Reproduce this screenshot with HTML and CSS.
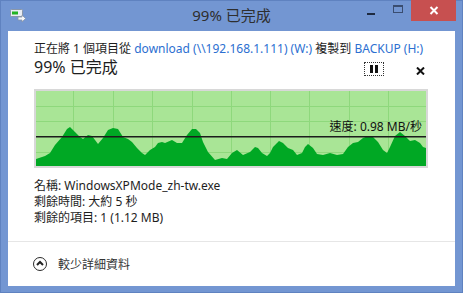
FILE: index.html
```html
<!DOCTYPE html>
<html lang="zh-Hant">

<head>
    <meta charset="UTF-8">
    <meta name="viewport" content="width=device-width, initial-scale=1.0">
    <title>99% 已完成</title>
    <link rel="stylesheet" href="styles.css">
</head>

<body>
    <div class="window">
        <header class="titlebar">
            <svg class="app-icon" width="16" height="14" viewBox="0 0 16 14">
                <rect x="0.5" y="1.5" width="12" height="7" rx="1" fill="#e9edf3" stroke="#8a97a8"/>
                <rect x="2" y="3.5" width="6" height="3" fill="#22b322"/>
                <path d="M8 9 H12 V7 L15.5 10.5 L12 14 V12 H8 Z" fill="#f4f6f9" stroke="#8a97a8" stroke-width="0.8"/>
            </svg>
            <div class="title">99% 已完成</div>
            <div class="controls">
                <span class="ctl ctl-min"><i></i></span>
                <span class="ctl ctl-max"><i></i></span>
                <span class="ctl ctl-close">
                    <svg width="10" height="9" viewBox="0 0 10 9">
                        <path d="M1.5 1 L8.5 8 M8.5 1 L1.5 8" stroke="#fff" stroke-width="2"/>
                    </svg>
                </span>
            </div>
        </header>

        <div class="client">
            <div class="progress">
                <p class="from">正在將 1 個項目從 <a href="#">download (\\192.168.1.111) (W:)</a> 複製到 <a href="#">BACKUP (H:)</a></p>

                <div class="status">
                    <span class="pct">99% 已完成</span>
                    <button class="pause" type="button"><i></i><i></i></button>
                    <button class="cancel" type="button">
                        <svg width="9" height="8" viewBox="0 0 9 8">
                            <path d="M1 0.5 L8 7.5 M8 0.5 L1 7.5" stroke="#111" stroke-width="2"/>
                        </svg>
                    </button>
                </div>

                <div class="graph">
                    <svg width="390" height="75" viewBox="36 91 390 75" preserveAspectRatio="none">
                        <rect x="36" y="91" width="390" height="75" fill="#a9e596"/>
                        <g stroke="#8ed87c" stroke-width="1">
                            <path d="M73.5 91 V166 M113.5 91 V166 M152.5 91 V166 M192.5 91 V166 M231.5 91 V166 M270.5 91 V166 M309.5 91 V166 M349.5 91 V166 M388.5 91 V166"/>
                            <path d="M36 106.5 H426 M36 121.5 H426 M36 152.5 H426"/>
                        </g>
                        <path fill="#00a824" d="M36,166 L36,159 L45,156 L50,153 L55,145 L62,137 L67,129 L70,127 L75,132 L80,137 L83,139 L88,135 L92,136 L95,140 L98,144 L103,138 L108,130 L113,128 L118,129 L123,137 L128,139 L132,142 L137,148 L142,153 L145,155 L150,150 L155,147 L158,143 L162,142 L165,143 L172,140 L177,143 L182,143 L187,135 L192,129 L196,129 L200,133 L203,142 L208,152 L215,160 L222,158 L227,159 L232,153 L237,150 L243,155 L250,152 L255,147 L258,148 L262,153 L267,156 L270,153 L273,147 L279,141 L283,143 L288,148 L293,150 L297,155 L302,153 L305,147 L308,144 L313,148 L317,154 L323,155 L330,153 L337,155 L343,154 L348,147 L353,143 L358,142 L363,138 L368,136 L373,137 L378,142 L383,150 L387,153 L390,147 L395,136 L400,132 L405,136 L410,141 L415,140 L420,143 L423,147 L426,148 L426,166 Z"/>
                        <path d="M36 136.7 H426" stroke="#1c1c1c" stroke-width="1.5"/>
                    </svg>
                    <span class="speed">速度: 0.98 MB/秒</span>
                </div>

                <ul class="details">
                    <li>名稱: WindowsXPMode_zh-tw.exe</li>
                    <li>剩餘時間: 大約 5 秒</li>
                    <li>剩餘的項目: 1 (1.12 MB)</li>
                </ul>
            </div>

            <div class="footer">
                <span class="toggle">
                    <svg width="8" height="6" viewBox="0 0 8 6">
                        <path d="M1 5 L4 2 L7 5" fill="none" stroke="#222" stroke-width="2"/>
                    </svg>
                </span>
                較少詳細資料
            </div>
        </div>
    </div>
</body>

</html>
```

FILE: styles.css
```css
* {
    box-sizing: border-box;
}

body {
    margin: 0;
    padding: 0;
    font-family: "Noto Sans", "Noto Sans CJK TC", sans-serif;
    font-size: 12px;
    color: #1e1e1e;
    background: #7396d2;
}

.window {
    width: 463px;
    height: 293px;
    border: 1px solid #5f82c0;
    background: #7396d2;
}

/* title bar */

.titlebar {
    height: 30px;
    display: grid;
    grid-template-columns: 1fr auto 1fr;
    align-items: start;
}

.app-icon {
    margin: 7px 0 0 9px;
}

.title {
    padding-top: 5px;
    font-size: 15px;
    line-height: 18px;
    color: #2e2e2e;
}

.controls {
    justify-self: end;
    display: flex;
    margin: -1px 6px 0 0;
}

.ctl {
    height: 21px;
    display: flex;
    align-items: center;
    justify-content: center;
}

.ctl-min {
    width: 26px;
}

.ctl-min i {
    width: 8px;
    height: 2px;
    margin-top: 6px;
    background: #1e2a40;
}

.ctl-max {
    width: 27px;
}

.ctl-max i {
    width: 10px;
    height: 8px;
    margin-top: -3px;
    border: 1px solid #3a4d70;
    border-top-width: 2px;
}

.ctl-close {
    width: 45px;
    background: #c75050;
}

/* client area */

.client {
    height: 255px;
    margin: 0 7px;
    background: #fff;
}

.progress {
    padding: 10px 27px 15px 26px;
    border-bottom: 1px solid #e6e6e6;
}

.from {
    margin: 0;
    line-height: 16px;
    white-space: nowrap;
}

.from a {
    color: #2c6fd1;
    text-decoration: none;
}

.status {
    height: 21px;
    display: flex;
    align-items: flex-start;
}

.pct {
    flex: 1;
    padding-top: 2px;
    font-size: 16px;
    line-height: 16px;
}

.status button {
    padding: 0;
    border: none;
    background: none;
    display: flex;
    align-items: center;
    justify-content: center;
}

.pause {
    width: 20px;
    height: 14px;
    margin: 5px 28px 0 0;
    gap: 2px;
    border: 1px dotted #333 !important;
}

.pause i {
    width: 3px;
    height: 8px;
    background: #111;
}

.cancel {
    width: 16px;
    height: 14px;
    margin-top: 7px;
}

.graph {
    position: relative;
    margin-top: 11px;
    width: 394px;
    height: 79px;
    border: 2px solid #d8d8d8;
}

.graph svg {
    display: block;
}

.speed {
    position: absolute;
    top: 28px;
    right: 4px;
    line-height: 16px;
    color: #111;
}

.details {
    list-style: none;
    margin: 10px 0 0;
    padding: 0;
}

.details li {
    line-height: 16px;
}

.footer {
    height: 43px;
    padding-left: 25px;
    display: flex;
    align-items: center;
    color: #333;
}

.toggle {
    width: 14px;
    height: 14px;
    margin-right: 11px;
    border: 1.5px solid #2a2a2a;
    border-radius: 50%;
    display: flex;
    align-items: center;
    justify-content: center;
}

.toggle svg {
    margin-top: -1px;
}
```
